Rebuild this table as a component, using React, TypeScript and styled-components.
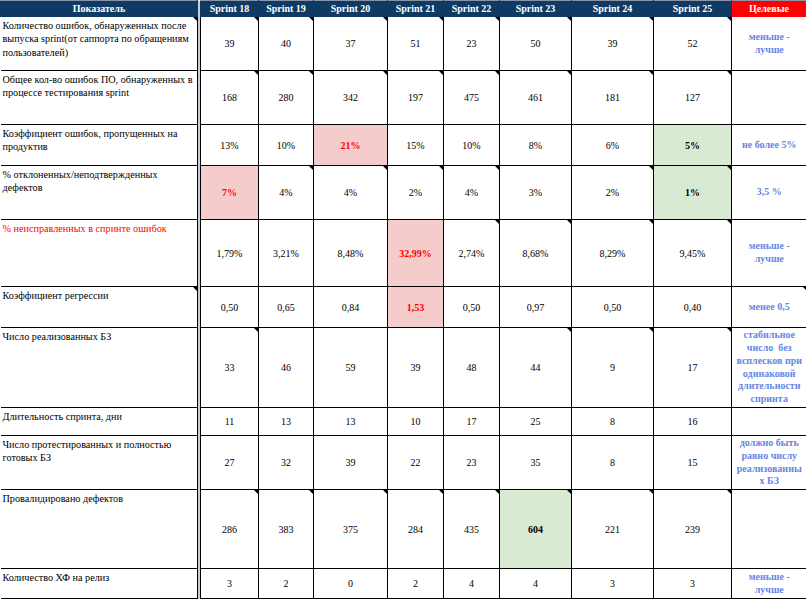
import React from "react";
import styled, { createGlobalStyle, css } from "styled-components";

const GlobalStyle = createGlobalStyle`
  html, body { margin: 0; padding: 0; background: #ffffff; }
  body { overflow: hidden; font-family: "Liberation Serif", "Times New Roman", serif; }
`;

type Tone = "bad" | "good" | undefined;

interface Cell { v: string; tone?: Tone }
interface Row {
  label: string[];
  alert?: boolean;
  values: Cell[];
  target: string[];
  notes: number[];
  h: number;
}

const c = (v: string, tone?: Tone): Cell => ({ v, tone });

const rows: Row[] = [
  {
    label: ["Количество ошибок, обнаруженных после", "выпуска sprint(от саппорта по обращениям", "пользователей)"],
    values: ["39", "40", "37", "51", "23", "50", "39", "52"].map((v) => c(v)),
    target: ["меньше -", "лучше"],
    notes: [0, 1, 2, 3, 4, 5, 6, 7, 8],
    h: 54,
  },
  {
    label: ["Общее кол-во ошибок ПО, обнаруженных в", "процессе тестирования sprint"],
    values: ["168", "280", "342", "197", "475", "461", "181", "127"].map((v) => c(v)),
    target: [],
    notes: [1, 2, 3, 4, 5, 6, 7, 8],
    h: 54,
  },
  {
    label: ["Коэффициент ошибок, пропущенных на", "продуктив"],
    values: [c("13%"), c("10%"), c("21%", "bad"), c("15%"), c("10%"), c("8%"), c("6%"), c("5%", "good")],
    target: ["не более 5%"],
    notes: [],
    h: 41,
  },
  {
    label: ["% отклоненных/неподтвержденных", "дефектов"],
    values: [c("7%", "bad"), c("4%"), c("4%"), c("2%"), c("4%"), c("3%"), c("2%"), c("1%", "good")],
    target: ["3,5 %"],
    notes: [2, 3, 4, 5, 7, 8],
    h: 54,
  },
  {
    label: ["% неисправленных в спринте ошибок"],
    alert: true,
    values: [c("1,79%"), c("3,21%"), c("8,48%"), c("32,99%", "bad"), c("2,74%"), c("8,68%"), c("8,29%"), c("9,45%")],
    target: ["меньше -", "лучше"],
    notes: [5, 6, 7, 8],
    h: 67,
  },
  {
    label: ["Коэффициент регрессии"],
    values: [c("0,50"), c("0,65"), c("0,84"), c("1,53", "bad"), c("0,50"), c("0,97"), c("0,50"), c("0,40")],
    target: ["менее 0,5"],
    notes: [0, 9],
    h: 41,
  },
  {
    label: ["Число реализованных БЗ"],
    values: ["33", "46", "59", "39", "48", "44", "9", "17"].map((v) => c(v)),
    target: ["стабильное", "число  без", "всплесков при", "одинаковой", "длительности", "спринта"],
    notes: [1, 6, 7, 8],
    h: 80,
  },
  {
    label: ["Длительность спринта, дни"],
    values: ["11", "13", "13", "10", "17", "25", "8", "16"].map((v) => c(v)),
    target: [],
    notes: [],
    h: 28,
  },
  {
    label: ["Число протестированных и полностью", "готовых БЗ"],
    values: ["27", "32", "39", "22", "23", "35", "8", "15"].map((v) => c(v)),
    target: ["должно быть", "равно числу", "реализованны", "х БЗ"],
    notes: [],
    h: 54,
  },
  {
    label: ["Провалидировано дефектов"],
    values: [c("286"), c("383"), c("375"), c("284"), c("435"), c("604", "good"), c("221"), c("239")],
    target: [],
    notes: [1, 2, 3, 4, 5, 6, 7, 8],
    h: 79,
  },
  {
    label: ["Количество ХФ на релиз"],
    values: ["3", "2", "0", "2", "4", "4", "3", "3"].map((v) => c(v)),
    target: ["меньше -", "лучше"],
    notes: [],
    h: 30,
  },
  {
    label: [""],
    values: [c(""), c(""), c(""), c("", "bad"), c(""), c(""), c(""), c("", "good")],
    target: [],
    notes: [0, 1, 2, 3, 4, 5, 6, 7],
    h: 30,
  },
];

const sprints = ["Sprint 18", "Sprint 19", "Sprint 20", "Sprint 21", "Sprint 22", "Sprint 23", "Sprint 24", "Sprint 25"];
const widths = [58, 55, 74, 56, 56, 72, 82, 78];

const Sheet = styled.table`
  border-collapse: collapse;
  table-layout: fixed;
  width: 806px;
  font-family: "Liberation Serif", "Times New Roman", serif;
  color: #000;
`;

const noteMark = css<{ $note?: boolean }>`
  position: relative;
  ${(p) =>
    p.$note &&
    css`
      &::after {
        content: "";
        position: absolute;
        top: 0;
        right: 0;
        width: 0;
        height: 0;
        border-top: 4px solid #000;
        border-left: 4px solid transparent;
      }
    `}
`;

const HeadCell = styled.th<{ $target?: boolean }>`
  height: 15px;
  padding: 0;
  background: ${(p) => (p.$target ? "#ff0000" : "#0f3a63")};
  border: 1px solid ${(p) => (p.$target ? "#ff0000" : "#0f3a63")};
  border-top-color: #8a96a8;
  color: #ffffff;
  font-size: 10px;
  font-weight: bold;
  line-height: 14px;
  text-align: center;
  vertical-align: middle;
  white-space: nowrap;
  overflow: hidden;
`;

const FreezeLine = styled.td`
  padding: 0;
  background: #c9ced8;
  border: none;
  border-left: 1px solid #2b2f36;
`;

const FreezeHead = styled.th`
  padding: 0;
  background: #c9ced8;
  border: none;
  border-left: 1px solid #2b2f36;
`;

const LabelCell = styled.td<{ $alert?: boolean; $note?: boolean }>`
  ${noteMark};
  padding: 2px 2px 0 2px;
  border: 1px solid #000;
  border-left: none;
  vertical-align: top;
  text-align: left;
  font-size: 10.2px;
  line-height: 13.3px;
  white-space: nowrap;
  overflow: hidden;
  color: ${(p) => (p.$alert ? "#ff0000" : "#000")};
`;

const ValueCell = styled.td<{ $tone?: Tone; $note?: boolean }>`
  ${noteMark};
  padding: 0;
  border: 1px solid #000;
  text-align: center;
  vertical-align: middle;
  font-size: 10px;
  line-height: 13px;
  white-space: nowrap;
  background: ${(p) => (p.$tone === "bad" ? "#f4cccc" : p.$tone === "good" ? "#d9ead3" : "#ffffff")};
  color: ${(p) => (p.$tone === "bad" ? "#ff0000" : "#000")};
  font-weight: ${(p) => (p.$tone ? "bold" : "normal")};
`;

const TargetCell = styled.td<{ $note?: boolean }>`
  ${noteMark};
  padding: 0;
  border: 1px solid #000;
  border-right: none;
  text-align: center;
  vertical-align: middle;
  font-size: 10px;
  line-height: 12.7px;
  font-weight: bold;
  color: #6586e4;
  white-space: pre;
`;

const Line = styled.span`
  display: block;
`;

export default function App() {
  return (
    <>
      <GlobalStyle />
      <Sheet>
        <colgroup>
          <col style={{ width: 197 }} />
          <col style={{ width: 3 }} />
          {widths.map((w, i) => (
            <col key={i} style={{ width: w }} />
          ))}
          <col style={{ width: 75 }} />
        </colgroup>
        <thead>
          <tr>
            <HeadCell>Показатель</HeadCell>
            <FreezeHead />
            {sprints.map((s) => (
              <HeadCell key={s}>{s}</HeadCell>
            ))}
            <HeadCell $target>Целевые</HeadCell>
          </tr>
        </thead>
        <tbody>
          {rows.map((r, ri) => (
            <tr key={ri} style={{ height: r.h }}>
              <LabelCell $alert={r.alert} $note={r.notes.includes(0)}>
                {r.label.map((l, i) => (
                  <Line key={i}>{l}</Line>
                ))}
              </LabelCell>
              <FreezeLine />
              {r.values.map((v, i) => (
                <ValueCell key={i} $tone={v.tone} $note={r.notes.includes(i + 1)}>
                  {v.v}
                </ValueCell>
              ))}
              <TargetCell $note={r.notes.includes(9)}>
                {r.target.map((l, i) => (
                  <Line key={i}>{l}</Line>
                ))}
              </TargetCell>
            </tr>
          ))}
        </tbody>
      </Sheet>
    </>
  );
}
